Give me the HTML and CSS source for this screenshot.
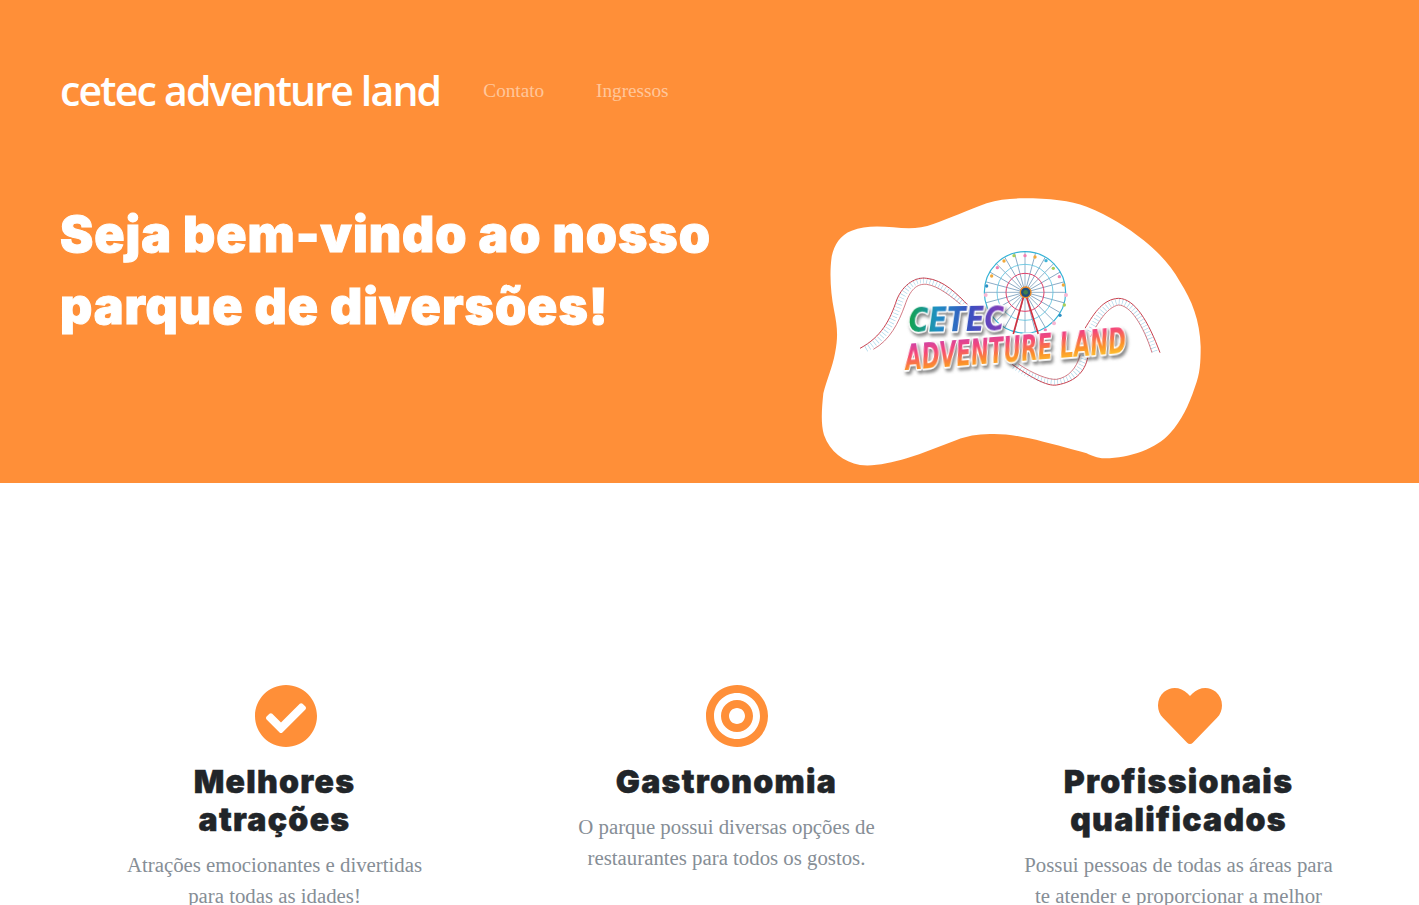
FILE: index.html
```html
<!DOCTYPE html>
<html lang="pt-BR">
<head>
    <meta charset="UTF-8">
    <meta name="viewport" content="width=device-width, initial-scale=1.0">
    <title>Cetec Adventure Land</title>
    <link rel="stylesheet" href="styles.css">
</head>
<body>

    <!-- Topo -->
    <header class="hero">
        <nav class="nav">
            <a class="brand" href="#">cetec adventure land</a>
            <a class="nav-link" href="#">Contato</a>
            <a class="nav-link" href="#">Ingressos</a>
        </nav>

        <div class="hero-row">
            <h1 class="hero-title">Seja bem-vindo ao nosso parque de diversões!</h1>

            <svg class="hero-logo" viewBox="0 0 1200 855" role="img" aria-label="Cetec Adventure Land">
                <defs>
                    <linearGradient id="grad-cetec" x1="0" x2="1" y1="0" y2="0">
                        <stop offset="0" stop-color="#12a34a"/>
                        <stop offset="0.3" stop-color="#1f8fc4"/>
                        <stop offset="0.65" stop-color="#3b4fc0"/>
                        <stop offset="1" stop-color="#8a3bb8"/>
                    </linearGradient>
                    <linearGradient id="grad-land" x1="0" x2="0.25" y1="0" y2="1">
                        <stop offset="0" stop-color="#b93fc0"/>
                        <stop offset="0.4" stop-color="#f4477a"/>
                        <stop offset="0.75" stop-color="#fb8f2a"/>
                        <stop offset="1" stop-color="#fdc32e"/>
                    </linearGradient>
                    <line id="spoke" x1="645" y1="307" x2="645" y2="185"/>
                </defs>

                <path class="blob" d="M640 25 C720 25 780 32 830 50 C900 78 950 110 1000 150 C1050 190 1085 230 1110 275 C1145 330 1170 390 1172 470 C1172 520 1170 550 1155 590 C1135 650 1115 690 1080 730 C1040 775 960 805 885 805 C860 805 845 797 830 790 C780 775 740 765 700 755 C640 740 590 730 540 732 C500 733 470 738 440 750 C390 768 340 790 290 805 C240 820 190 830 150 825 C100 815 60 785 42 735 C32 700 35 660 40 610 C50 570 68 530 75 490 C85 440 82 410 72 360 C62 310 58 250 65 200 C72 165 90 135 125 122 C160 108 200 108 250 112 C290 116 330 118 370 102 C420 85 470 62 530 40 C565 28 600 25 640 25 Z"/>

                <!-- montanha russa -->
                <g class="track">
                    <path class="ties" d="M168 477 C225 445 250 395 270 335 C290 285 320 265 350 272 C395 280 435 320 470 350"/>
                    <path class="rail" d="M150 475 C215 440 240 390 260 330 C280 280 320 260 350 265 C400 270 440 310 478 350"/>
                    <path class="rail rail-soft" d="M190 478 C240 450 265 400 285 345 C300 300 320 280 350 283 C385 288 425 320 460 350"/>

                    <path class="ties" d="M840 425 C865 375 890 340 925 335 C965 335 1005 395 1035 488"/>
                    <path class="rail" d="M825 415 C855 365 880 328 925 325 C975 325 1015 395 1050 488"/>
                    <path class="rail rail-soft" d="M842 440 C870 385 895 352 925 345 C960 345 1000 405 1026 488"/>

                    <path class="ties" d="M612 528 C660 560 710 578 740 575 C785 570 815 540 825 495"/>
                    <path class="rail" d="M605 522 C660 560 710 590 740 585 C800 575 830 540 835 490"/>
                    <path class="rail rail-soft" d="M625 522 C670 552 715 570 740 568 C775 562 800 535 810 495"/>
                </g>

                <!-- roda gigante -->
                <g class="wheel">
                    <g class="spokes">
                        <use href="#spoke"/>
                        <use href="#spoke" transform="rotate(15 645 307)"/>
                        <use href="#spoke" transform="rotate(30 645 307)"/>
                        <use href="#spoke" transform="rotate(45 645 307)"/>
                        <use href="#spoke" transform="rotate(60 645 307)"/>
                        <use href="#spoke" transform="rotate(75 645 307)"/>
                        <use href="#spoke" transform="rotate(90 645 307)"/>
                        <use href="#spoke" transform="rotate(105 645 307)"/>
                        <use href="#spoke" transform="rotate(120 645 307)"/>
                        <use href="#spoke" transform="rotate(135 645 307)"/>
                        <use href="#spoke" transform="rotate(150 645 307)"/>
                        <use href="#spoke" transform="rotate(165 645 307)"/>
                        <use href="#spoke" transform="rotate(180 645 307)"/>
                        <use href="#spoke" transform="rotate(195 645 307)"/>
                        <use href="#spoke" transform="rotate(210 645 307)"/>
                        <use href="#spoke" transform="rotate(225 645 307)"/>
                        <use href="#spoke" transform="rotate(240 645 307)"/>
                        <use href="#spoke" transform="rotate(255 645 307)"/>
                        <use href="#spoke" transform="rotate(270 645 307)"/>
                        <use href="#spoke" transform="rotate(285 645 307)"/>
                        <use href="#spoke" transform="rotate(300 645 307)"/>
                        <use href="#spoke" transform="rotate(315 645 307)"/>
                        <use href="#spoke" transform="rotate(330 645 307)"/>
                        <use href="#spoke" transform="rotate(345 645 307)"/>
                    </g>
                    <circle class="ring-out" cx="645" cy="307" r="122"/>
                    <circle class="ring-mid" cx="645" cy="307" r="84"/>
                    <circle class="ring-in" cx="645" cy="307" r="57"/>
                    <g class="cars">
                        <circle cx="645" cy="197" r="5" fill="#f27fb2"/>
                        <circle cx="675" cy="201" r="5" fill="#f2a93b"/>
                        <circle cx="708" cy="212" r="5" fill="#3fb4d8"/>
                        <circle cx="730" cy="235" r="5" fill="#a8cf5a"/>
                        <circle cx="748" cy="260" r="5" fill="#f27fb2"/>
                        <circle cx="760" cy="285" r="5" fill="#f2a93b"/>
                        <circle cx="768" cy="315" r="6" fill="#f7b6d2"/>
                        <circle cx="763" cy="345" r="5" fill="#a8cf5a"/>
                        <circle cx="750" cy="376" r="5" fill="#2d8fc4"/>
                        <circle cx="732" cy="400" r="6" fill="#f7b6d2"/>
                        <circle cx="706" cy="420" r="5" fill="#f27fb2"/>
                        <circle cx="612" cy="197" r="5" fill="#a8cf5a"/>
                        <circle cx="582" cy="213" r="5" fill="#f2a93b"/>
                        <circle cx="562" cy="233" r="5" fill="#f27fb2"/>
                        <circle cx="545" cy="258" r="5" fill="#f2a93b"/>
                        <circle cx="530" cy="288" r="5" fill="#2d8fc4"/>
                        <circle cx="527" cy="315" r="6" fill="#f7b6d2"/>
                    </g>
                    <line class="leg" x1="640" y1="322" x2="610" y2="432"/>
                    <line class="leg" x1="650" y1="322" x2="685" y2="432"/>
                    <circle class="hub" cx="647" cy="307" r="16"/>
                    <circle cx="647" cy="307" r="7" fill="#3f7f4a"/>
                </g>

                <text class="logo-text logo-cetec" x="296" y="426" textLength="288" lengthAdjust="spacingAndGlyphs" transform="rotate(-1 296 426)">CETEC</text>
                <text class="logo-text logo-land" x="288" y="541" textLength="665" lengthAdjust="spacingAndGlyphs" transform="rotate(-4.5 288 541)">ADVENTURE LAND</text>
            </svg>
        </div>
    </header>

    <!-- Destaques -->
    <section class="features">
        <article class="feature">
            <svg class="feature-icon" viewBox="0 0 512 512"><path d="M504 256c0 136.967-111.033 248-248 248S8 392.967 8 256 119.033 8 256 8s248 111.033 248 248zM227.314 387.314l184-184c6.248-6.248 6.248-16.379 0-22.627l-22.627-22.627c-6.248-6.249-16.379-6.249-22.628 0L216 308.118l-70.059-70.059c-6.248-6.248-16.379-6.248-22.628 0l-22.627 22.627c-6.248 6.248-6.248 16.379 0 22.627l104 104c6.249 6.249 16.379 6.249 22.628.001z"/></svg>
            <h3>Melhores atrações</h3>
            <p>Atrações emocionantes e divertidas para todas as idades!</p>
        </article>
        <article class="feature">
            <svg class="feature-icon" viewBox="0 0 496 512"><path d="M248 8C111.03 8 0 119.03 0 256s111.03 248 248 248 248-111.03 248-248S384.97 8 248 8zm0 432c-101.69 0-184-82.29-184-184 0-101.69 82.29-184 184-184 101.69 0 184 82.29 184 184 0 101.69-82.29 184-184 184zm0-312c-70.69 0-128 57.31-128 128s57.31 128 128 128 128-57.31 128-128-57.31-128-128-128zm0 192c-35.37 0-64-28.63-64-64s28.63-64 64-64 64 28.63 64 64-28.63 64-64 64z"/></svg>
            <h3>Gastronomia</h3>
            <p>O parque possui diversas opções de restaurantes para todos os gostos.</p>
        </article>
        <article class="feature">
            <svg class="feature-icon" viewBox="0 0 512 512"><path d="M462.3 62.6C407.5 15.9 326 24.3 275.7 76.2L256 96.5l-19.7-20.3C186.1 24.3 104.5 15.9 49.7 62.6c-62.8 53.6-66.1 149.8-9.9 207.9l193.5 199.8c12.5 12.9 32.8 12.9 45.3 0l193.5-199.8c56.3-58.1 53-154.3-9.8-207.9z"/></svg>
            <h3>Profissionais qualificados</h3>
            <p>Possui pessoas de todas as áreas para te atender e proporcionar a melhor experiência.</p>
        </article>
    </section>

</body>
</html>
```
FILE: styles.css
```css
html, body {
    margin: 0;
    padding: 0;
    height: 100%;
    overflow: hidden;
    background: #fff;
    font-family: "Liberation Serif", serif;
}

/* Topo */
.hero {
    height: 483px;
    background: #ff8f38;
    padding-left: 60px;
    box-sizing: border-box;
}

.nav {
    display: flex;
    align-items: center;
    height: 54px;
    padding-top: 64px;
}

.brand {
    font-family: "Open Sans", sans-serif;
    font-weight: 600;
    font-size: 41px;
    line-height: 50px;
    letter-spacing: -1.82px;
    color: #fff;
    text-decoration: none;
    margin: -3px 43px 0 0;
}

.nav-link {
    font-size: 19.2px;
    color: rgba(255, 255, 255, 0.5);
    text-decoration: none;
    margin-right: 52px;
}

.hero-row {
    display: flex;
    margin-top: 72px;
}

.hero-title {
    width: 750px;
    margin: 8px 0 0;
    font-family: Inter, sans-serif;
    font-weight: 900;
    font-size: 50px;
    line-height: 72px;
    letter-spacing: 0.96px;
    -webkit-text-stroke: 1px #fff;
    color: #fff;
}

.hero-logo {
    width: 400px;
    height: 285px;
}

.blob {
    fill: #fff;
}

.track path {
    fill: none;
}

.rail {
    stroke: #c8414f;
    stroke-width: 3;
}

.rail-soft {
    stroke: #c9606c;
    stroke-width: 2.5;
}

.ties {
    stroke: #a9d6ea;
    stroke-width: 18;
    stroke-dasharray: 2 8;
}

.spokes {
    stroke: #4f7fa8;
    stroke-width: 1.8;
}

.wheel .ring-out,
.wheel .ring-mid,
.wheel .ring-in {
    fill: none;
}

.wheel .ring-out {
    stroke: #35b3d6;
    stroke-width: 3.5;
}

.wheel .ring-mid {
    stroke: #5cc1dd;
    stroke-width: 2.5;
}

.wheel .ring-in {
    stroke: #e0406a;
    stroke-width: 3;
}

.wheel .hub {
    fill: #1f4f7a;
    stroke: #f08a24;
    stroke-width: 4;
}

.leg {
    stroke: #d2303f;
    stroke-width: 5;
}

.logo-text {
    font-family: "DejaVu Sans", sans-serif;
    font-weight: 700;
    font-style: italic;
    paint-order: stroke;
    stroke: #fff;
    stroke-width: 10px;
    stroke-linejoin: round;
    filter: drop-shadow(5px 9px 5px rgba(60, 60, 60, 0.6));
}

.logo-cetec {
    font-size: 102px;
    fill: url(#grad-cetec);
}

.logo-land {
    font-size: 108px;
    fill: url(#grad-land);
}

/* Destaques */
.features {
    display: grid;
    grid-template-columns: repeat(3, 452px);
    margin-left: 48.5px;
    padding-top: 201px;
}

.feature {
    padding: 0 68px;
    text-align: center;
}

/* icones alinhados a esquerda, um pouco fora do centro como no original */
.feature-icon {
    display: block;
    height: 64px;
    margin-left: 137.5px;
    fill: #ff8f38;
}

.feature h3 {
    margin: 15px 0 9.5px;
    font-family: Inter, sans-serif;
    font-weight: 900;
    font-size: 32px;
    line-height: 38.4px;
    letter-spacing: 1.3px;
    -webkit-text-stroke: 0.5px #212529;
    color: #212529;
}

.feature p {
    margin: 0;
    font-size: 20.8px;
    line-height: 31px;
    color: #868e96;
}
```
